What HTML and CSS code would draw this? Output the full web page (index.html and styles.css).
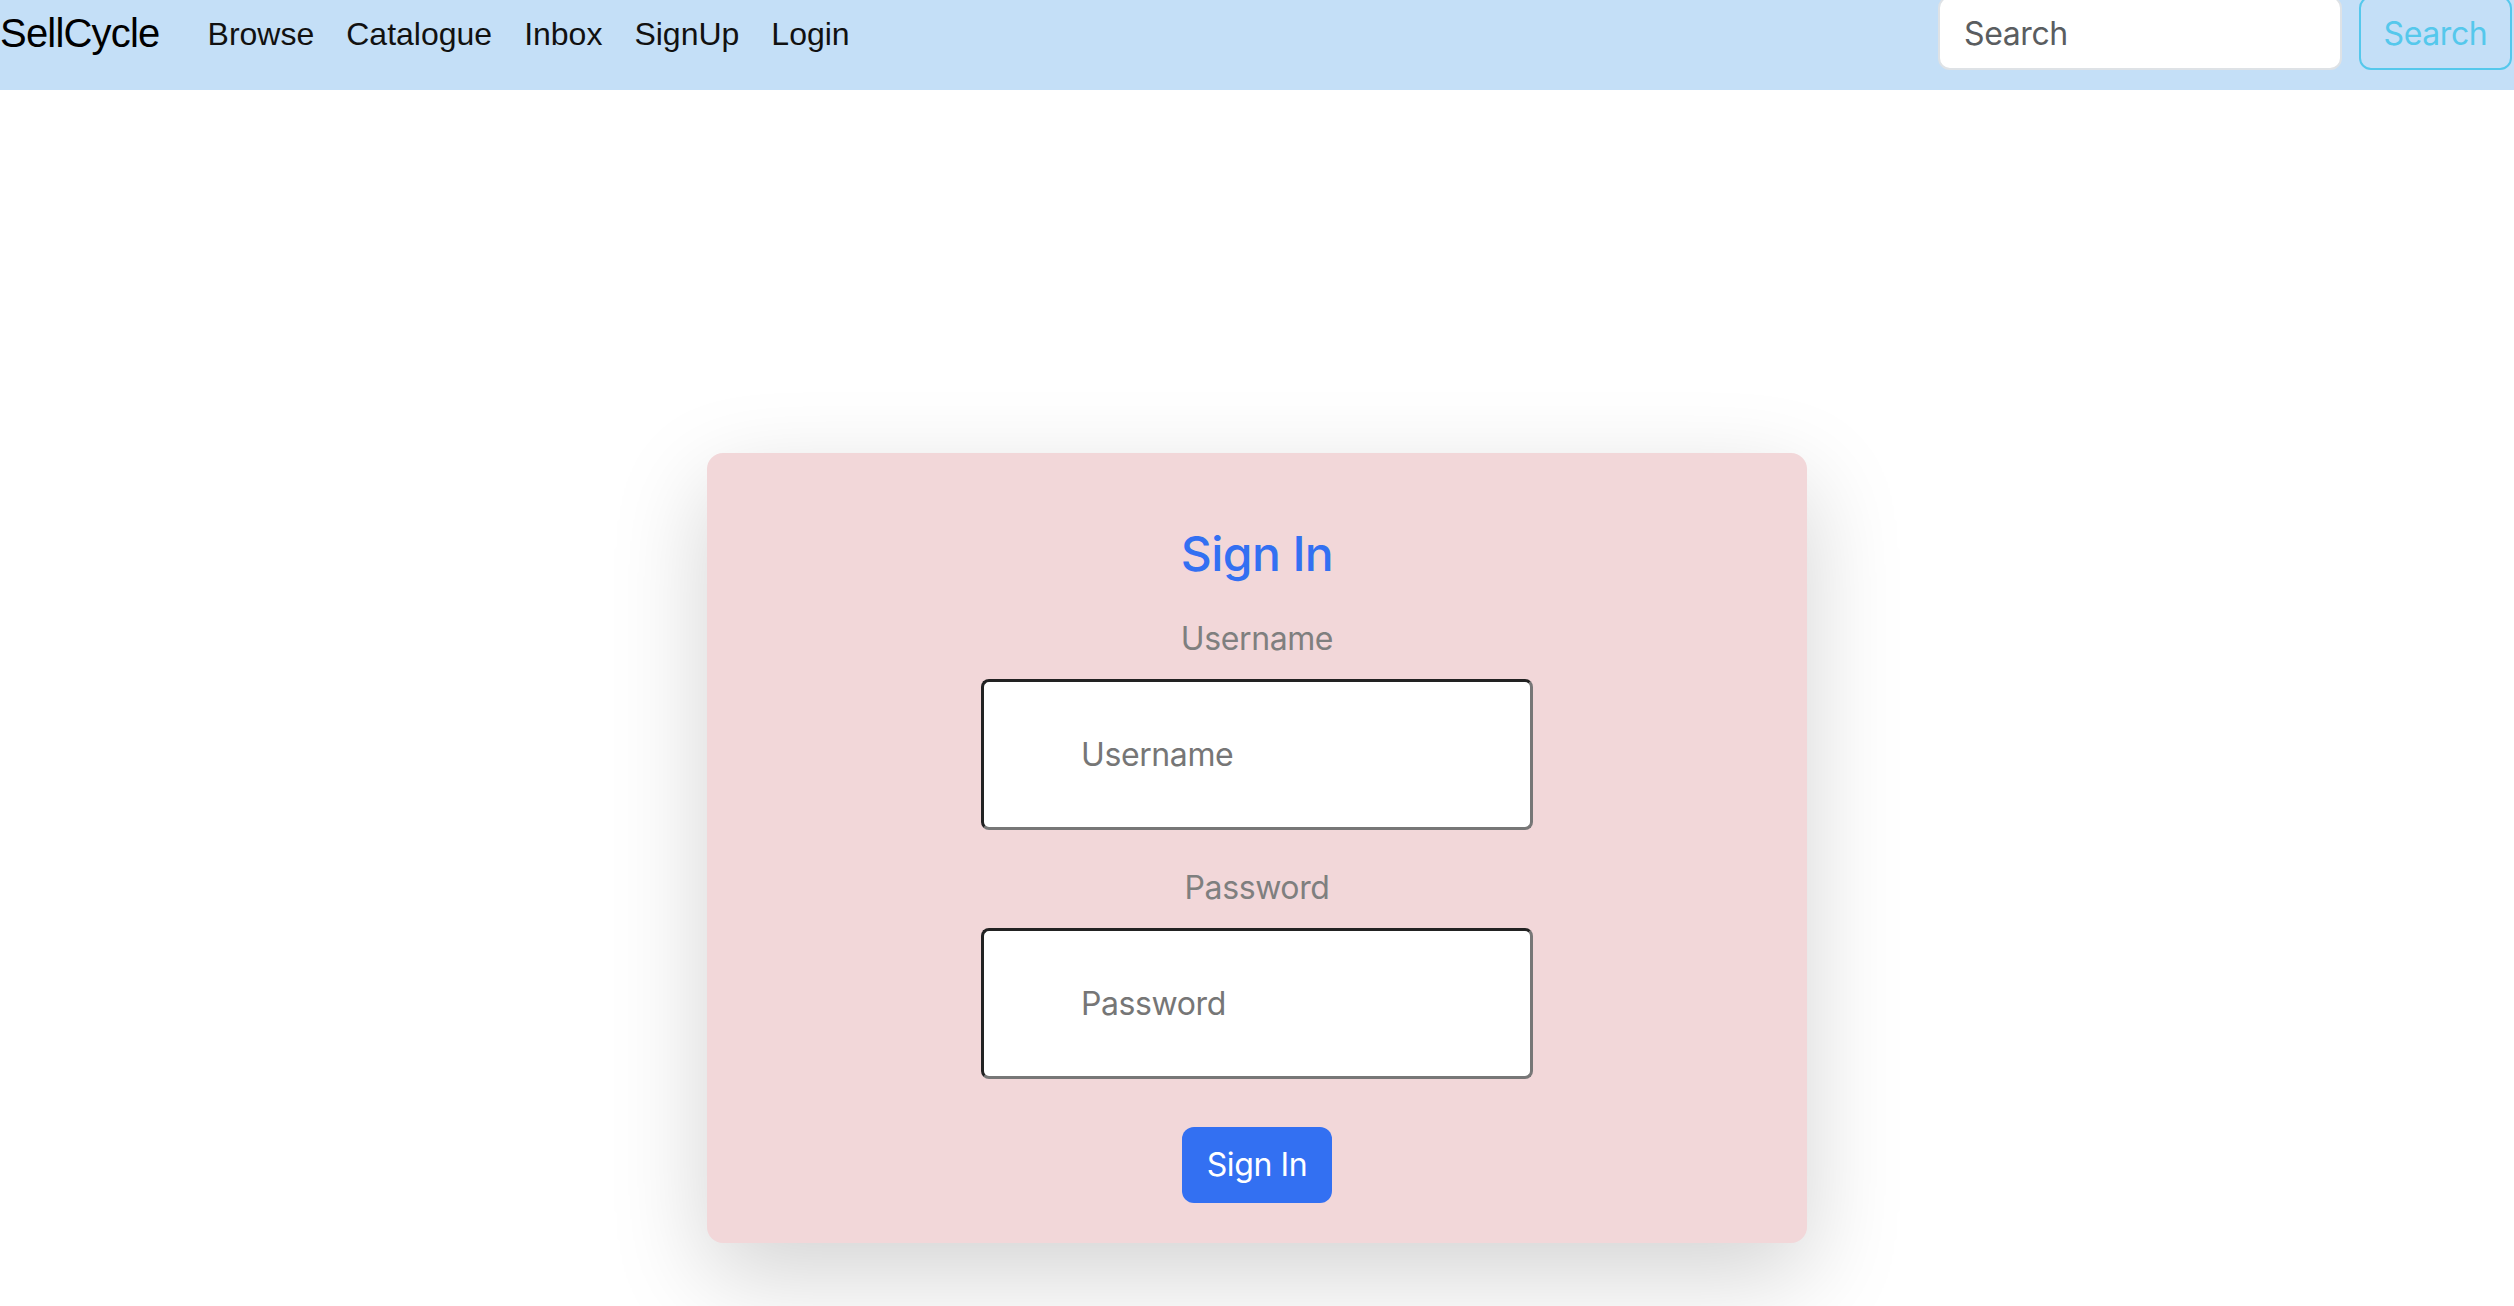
FILE: index.html
```html
<!DOCTYPE html>
<html lang="en">
<head>
<meta charset="utf-8">
<title>SellCycle - Sign In</title>
<link rel="stylesheet" href="styles.css">
</head>
<body>
<nav class="navbar">
  <a class="brand" href="#">SellCycle</a>
  <ul class="nav-links">
    <li><a href="#">Browse</a></li>
    <li><a href="#">Catalogue</a></li>
    <li><a href="#">Inbox</a></li>
    <li><a href="#">SignUp</a></li>
    <li><a href="#">Login</a></li>
  </ul>
  <form class="search">
    <input class="search-input" type="search" placeholder="Search">
    <button class="search-btn" type="button">Search</button>
  </form>
</nav>
<main class="page">
  <form class="card">
    <h1 class="card-title">Sign In</h1>
    <div class="field">
      <label class="field-label" for="username">Username</label>
      <input class="field-input" id="username" type="text" placeholder="Username">
    </div>
    <div class="field">
      <label class="field-label" for="password">Password</label>
      <input class="field-input" id="password" type="password" placeholder="Password">
    </div>
    <button class="submit" type="button">Sign In</button>
  </form>
</main>
</body>
</html>
```

FILE: styles.css
```css
html {
  overflow: hidden;
}

html, body {
  margin: 0;
  padding: 0;
  background: #ffffff;
}

body {
  font-family: Inter, "Noto Sans", sans-serif;
  letter-spacing: -0.4px;
}

.navbar {
  display: flex;
  align-items: center;
  height: 90px;
  box-sizing: border-box;
  padding: 0 2px 24px 0;
  background: #c4dff7;
  letter-spacing: 0;
}

.brand {
  font-family: "Liberation Sans", Arial, sans-serif;
  font-size: 40px;
  letter-spacing: -0.8px;
  color: #000;
  text-decoration: none;
  margin-right: 32px;
}

.nav-links {
  display: flex;
  list-style: none;
  margin: 3px 0 0 0;
  padding: 0;
}

.nav-links a {
  display: block;
  padding: 0 16px;
  font-family: "Liberation Sans", Arial, sans-serif;
  font-size: 32px;
  color: #111;
  text-decoration: none;
}

.search {
  margin-left: auto;
  display: flex;
  gap: 17px;
}

.search-input {
  width: 404px;
  height: 74px;
  box-sizing: border-box;
  border: 2px solid #dee2e6;
  border-radius: 12px;
  background: #fff;
  padding: 0 24px;
  font-family: Inter, sans-serif;
  font-size: 32px;
  letter-spacing: -0.4px;
  color: #212529;
  outline: none;
}

.search-input::placeholder {
  color: #5a5d60;
}

.search-btn {
  width: 153px;
  height: 74px;
  box-sizing: border-box;
  border: 2px solid #55c8ec;
  border-radius: 12px;
  background: transparent;
  color: #55c8ec;
  font-family: Inter, sans-serif;
  font-size: 32px;
  letter-spacing: -0.4px;
  padding: 0;
}

.page {
  display: flex;
  justify-content: center;
  padding: 363px 0 120px;
}

.card {
  width: 1100px;
  box-sizing: border-box;
  padding: 72px 0 40px;
  border-radius: 16px;
  background: #f2d7d9;
  box-shadow: 0 32px 96px rgba(0, 0, 0, 0.175);
  display: flex;
  flex-direction: column;
  align-items: center;
}

.card-title {
  margin: 0 0 32px;
  font-size: 48px;
  line-height: 57.6px;
  font-weight: 500;
  letter-spacing: -0.6px;
  color: #3370f2;
}

.field {
  display: flex;
  flex-direction: column;
  align-items: center;
}

.field + .field {
  margin-top: 34px;
}

.field-label {
  font-size: 32px;
  line-height: 48px;
  color: #7f7f7f;
  margin-bottom: 16px;
}

.field-input {
  width: 552px;
  height: 151px;
  box-sizing: border-box;
  border: 3px solid;
  border-color: #222 #777 #777 #222;
  border-radius: 8px;
  background: #fff;
  padding: 0 0 0 97px;
  font-family: Inter, sans-serif;
  font-size: 32px;
  letter-spacing: -0.4px;
  color: #222;
  outline: none;
}

.field-input::placeholder {
  color: #767676;
}

.submit {
  margin-top: 48px;
  width: 150px;
  height: 76px;
  border: none;
  border-radius: 12px;
  background: #3370f2;
  color: #fff;
  font-family: Inter, sans-serif;
  font-size: 32px;
  letter-spacing: -0.4px;
  padding: 0;
}
```
